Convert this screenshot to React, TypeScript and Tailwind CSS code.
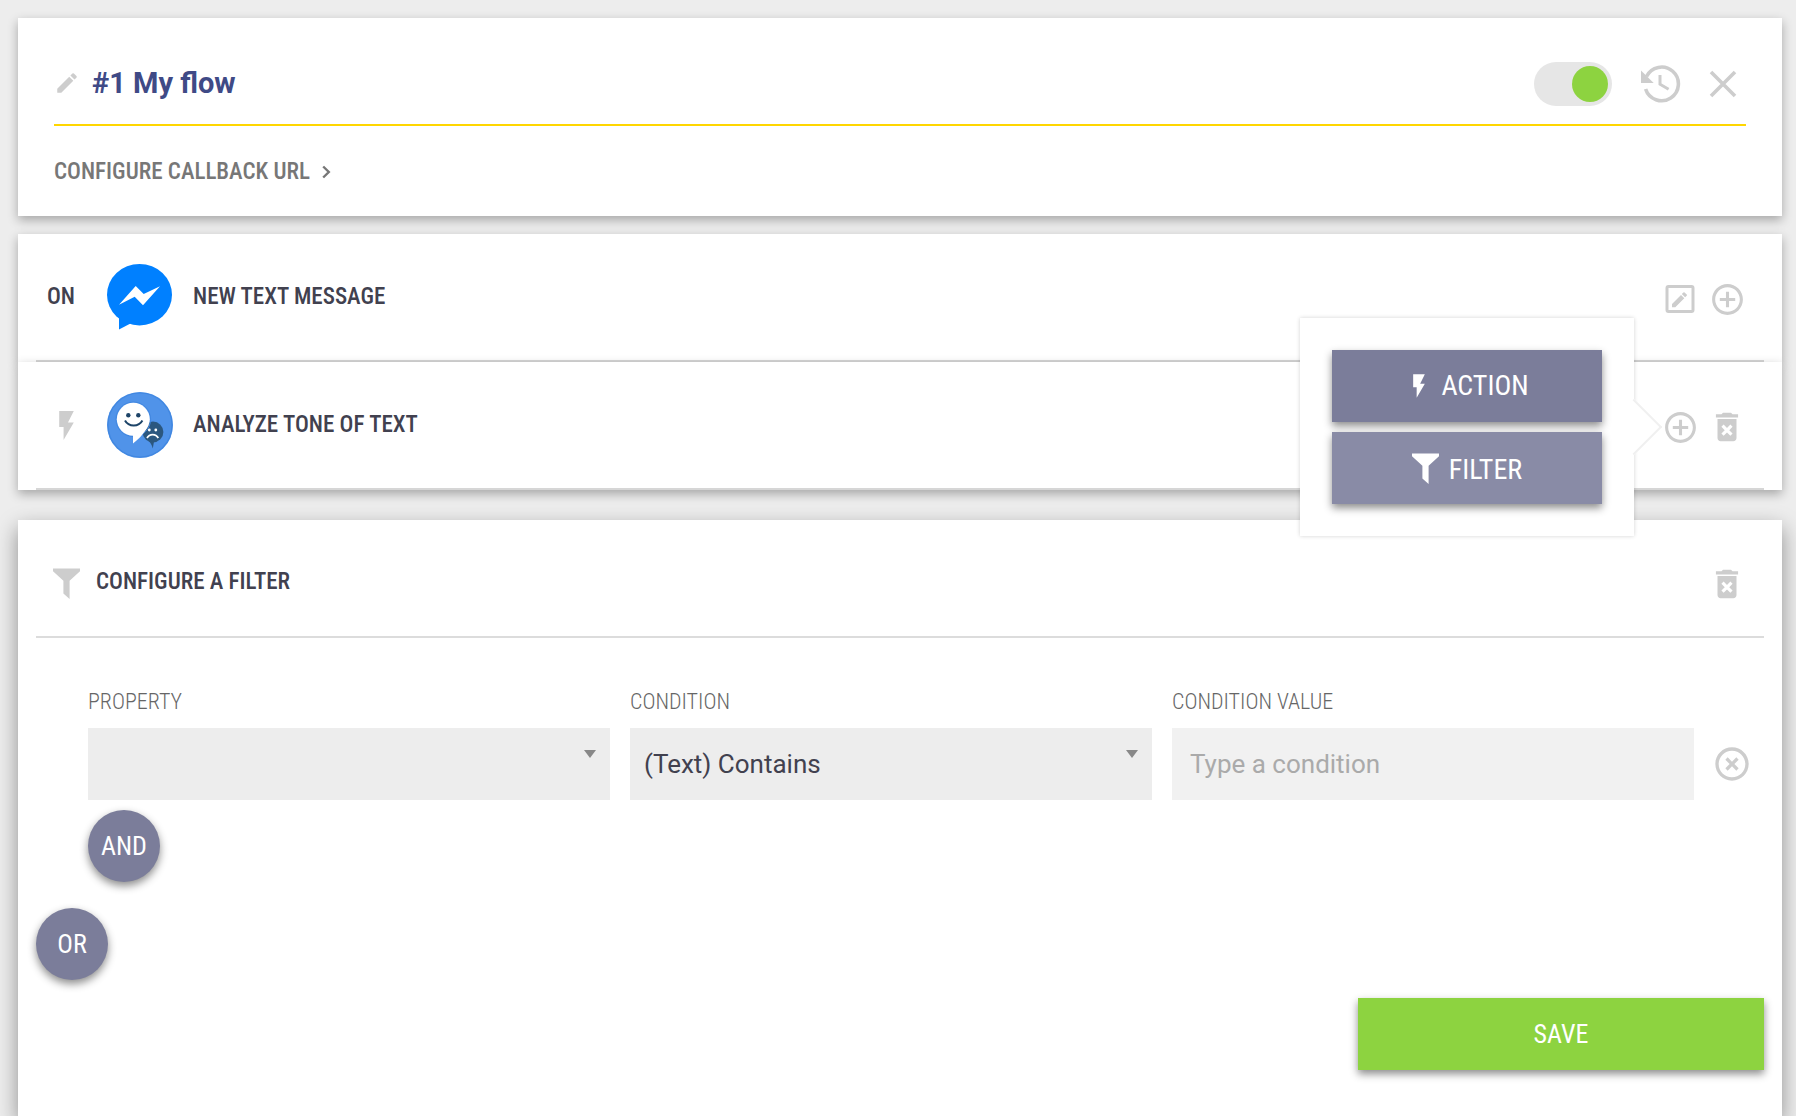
import { useState } from "react";
import type { ReactNode } from "react";
import { MdAddCircleOutline, MdDeleteForever, MdEdit, MdFlashOn, MdHighlightOff } from "react-icons/md";

const condensed = "font-['Roboto_Condensed','Roboto',sans-serif]";
const cardShadow = "shadow-[0_4px_10px_rgba(0,0,0,0.3)]";
const buttonShadow = "shadow-[0_4px_8px_rgba(0,0,0,0.45)]";

function HistoryIcon() {
  return (
    <svg width="40" height="38" viewBox="0 0 40 38" fill="none" aria-hidden="true">
      <path d="M5.5 11.5A16.8 16.8 0 1 1 4.6 24" stroke="currentColor" strokeWidth="3.6" />
      <path d="M0 5.5V18h12.7z" fill="currentColor" />
      <path d="M19 10v9.2l8.6 5" stroke="currentColor" strokeWidth="3" />
    </svg>
  );
}

function CloseIcon() {
  return (
    <svg width="28" height="28" viewBox="0 0 28 28" fill="none" aria-hidden="true">
      <path d="M2 2l24 24M26 2L2 26" stroke="currentColor" strokeWidth="3.6" />
    </svg>
  );
}

function ChevronIcon() {
  return (
    <svg width="9" height="14" viewBox="0 0 9 14" fill="none" aria-hidden="true">
      <path d="M1.2 1.5L6.8 7l-5.600 5.500" stroke="currentColor" strokeWidth="2.4" />
    </svg>
  );
}

function EditBoxIcon() {
  return (
    <svg width="30" height="30" viewBox="0 0 30 30" fill="none" aria-hidden="true">
      <rect x="2" y="2.5" width="26" height="25" rx="1.5" stroke="currentColor" strokeWidth="3" />
      <path
        d="M7 20v3.300h3.300l9-9-3.300-3.300L7 20zm14.700-8.200a.8.8 0 0 0 0-1.200l-2.100-2.100a.8.8 0 0 0-1.200 0L16.800 10l3.300 3.300 1.600-1.500z"
        fill="currentColor"
      />
    </svg>
  );
}

function FunnelIcon() {
  return (
    <svg width="27" height="31" viewBox="0 0 27 31" aria-hidden="true">
      <path d="M0 .5h27v2.700l-10.400 9.600V31l-6.200-5.600V12.800L0 3.200z" fill="currentColor" />
    </svg>
  );
}

function MessengerIcon() {
  return (
    <svg width="66" height="66" viewBox="0 0 66 66" aria-hidden="true">
      <ellipse cx="32.5" cy="30.7" rx="32.5" ry="30.7" fill="#0080ff" />
      <path d="M12 50v15.600l11.500-6.200z" fill="#0080ff" />
      <path d="M12 40.700L28.700 22l8 8L53 22.300l-17 19-8.300-8.600z" fill="#fff" />
    </svg>
  );
}

function ToneIcon() {
  return (
    <svg width="66" height="66" viewBox="0 0 66 66" fill="none" aria-hidden="true">
      <circle cx="33" cy="33" r="33" fill="#5093e9" />
      <circle cx="33" cy="33" r="32" stroke="#4187e0" strokeWidth="1.2" />
      <circle cx="46" cy="40" r="10.4" fill="#2b577f" />
      <path d="M39 48c3.500 1 5.500 3.500 6.800 8.500l1.200-7z" fill="#2b577f" />
      <circle cx="42.3" cy="38" r="1.4" fill="#fff" />
      <circle cx="48.8" cy="38" r="1.4" fill="#fff" />
      <path d="M40 46c2.500-4.600 8.800-4.600 11.300 0" stroke="#fff" strokeWidth="1.7" />
      <circle cx="26.3" cy="27.3" r="17.3" stroke="#4187e0" />
      <circle cx="26.3" cy="27.3" r="16.5" fill="#fff" />
      <path d="M26 42v9.500c5.500-4.500 11-9.500 14-16.500z" fill="#fff" />
      <circle cx="21.3" cy="23.3" r="2.2" fill="#1d4468" />
      <circle cx="31.3" cy="23.3" r="2.2" fill="#1d4468" />
      <path d="M18 28.600c3.600 6.600 13.800 6.600 17.400 0" stroke="#1d4468" strokeWidth="2" />
    </svg>
  );
}

function IconButton({ label, children }: { label: string; children: ReactNode }) {
  return (
    <button type="button" aria-label={label} className="flex items-center justify-center text-[#cdcdcd]">
      {children}
    </button>
  );
}

function FlowHeader() {
  const [enabled, setEnabled] = useState(true);

  return (
    <header className={`bg-white px-9 ${cardShadow}`}>
      <div className="flex h-[108px] items-center justify-between border-b-2 border-[#ffd600] pt-6">
        <div className="flex items-center gap-3">
          <IconButton label="Rename flow">
            <MdEdit size={26} />
          </IconButton>
          <h1 className="text-[29px] leading-9 font-bold text-[#3f4a86]">#1 My flow</h1>
        </div>
        <div className="flex items-center pt-0.5 pr-[9px]">
          <label className="mr-[29px] flex h-11 w-[78px] cursor-pointer items-center rounded-full bg-[#e6e6e6] p-1">
            <input
              type="checkbox"
              aria-label="Flow enabled"
              className="peer sr-only"
              checked={enabled}
              onChange={(e) => setEnabled(e.target.checked)}
            />
            <span className="size-9 rounded-full bg-[#b5b5b5] peer-checked:ml-auto peer-checked:bg-[#8dd340]" />
          </label>
          <div className="flex items-center gap-7">
            <IconButton label="History">
              <HistoryIcon />
            </IconButton>
            <IconButton label="Close">
              <CloseIcon />
            </IconButton>
          </div>
        </div>
      </div>
      <div className="flex h-[90px] items-center pt-0.5">
        <button type="button" className={`flex items-center gap-3 text-[23px] font-medium text-[#777] ${condensed}`}>
          CONFIGURE CALLBACK URL
          <ChevronIcon />
        </button>
      </div>
    </header>
  );
}

function AddStepMenu() {
  return (
    <div className="absolute top-1/2 right-full mr-7 w-[334px] -translate-y-1/2 bg-white p-8 shadow-[0_0_4px_rgba(0,0,0,0.18)]">
      <span className="absolute top-1/2 -right-5 size-10 -translate-y-1/2 rotate-45 border-t-2 border-r-2 border-[#f0f0f0] bg-white" />
      <div className={`relative flex flex-col gap-2.5 text-[28px] font-normal text-white ${condensed}`}>
        <button type="button" className={`flex h-[72px] items-center justify-center gap-2 bg-[#7b7d9a] ${buttonShadow}`}>
          <MdFlashOn size={28} />
          ACTION
        </button>
        <button type="button" className={`flex h-[72px] items-center justify-center gap-2.5 bg-[#898ba6] ${buttonShadow}`}>
          <FunnelIcon />
          <span className="pt-1">FILTER</span>
        </button>
      </div>
    </div>
  );
}

function StepRow({
  lead,
  icon,
  title,
  children,
}: {
  lead: ReactNode;
  icon: ReactNode;
  title: string;
  children: ReactNode;
}) {
  return (
    <li className={`bg-white px-[18px] ${cardShadow}`}>
      <div className={`flex h-32 items-center border-b-2 border-[#d6d6d6] text-[23px] font-medium text-[#41414f] ${condensed}`}>
        <div className="w-[71px] pl-[11px]">{lead}</div>
        {icon}
        <h2 className="ml-5">{title}</h2>
        <div className="ml-auto flex items-center pt-1">{children}</div>
      </div>
    </li>
  );
}

function StepList() {
  return (
    <ul className="relative z-10 mt-[18px]">
      <StepRow lead="ON" icon={<MessengerIcon />} title="NEW TEXT MESSAGE">
        <div className="flex items-center gap-3.5 pr-[18px]">
          <IconButton label="Edit trigger">
            <EditBoxIcon />
          </IconButton>
          <IconButton label="Add step after trigger">
            <MdAddCircleOutline size={37} />
          </IconButton>
        </div>
      </StepRow>
      <StepRow
        lead={<MdFlashOn size={35} className="ml-0.5 text-[#cdcdcd]" />}
        icon={<ToneIcon />}
        title="ANALYZE TONE OF TEXT"
      >
        <div className="flex items-center gap-[9px] pr-[18px]">
          <div className="relative">
            <IconButton label="Add step">
              <MdAddCircleOutline size={37} />
            </IconButton>
            <AddStepMenu />
          </div>
          <IconButton label="Delete step">
            <MdDeleteForever size={38} />
          </IconButton>
        </div>
      </StepRow>
    </ul>
  );
}

function FieldLabel({ htmlFor, children }: { htmlFor: string; children: ReactNode }) {
  return (
    <label htmlFor={htmlFor} className={`block text-[22px] leading-8 font-light text-[#666] ${condensed}`}>
      {children}
    </label>
  );
}

function SelectField({ id, label, options }: { id: string; label: string; options: string[] }) {
  return (
    <div className="flex-1">
      <FieldLabel htmlFor={id}>{label}</FieldLabel>
      <div className="relative mt-2.5">
        <select id={id} className="h-[72px] w-full appearance-none bg-[#ededed] px-3.5 text-[26px] text-[#41414f]">
          {options.map((o) => (
            <option key={o}>{o}</option>
          ))}
        </select>
        <svg width="12" height="8" viewBox="0 0 12 8" className="pointer-events-none absolute top-[22px] right-3.5">
          <path d="M0 0h12L6 8z" fill="#888" />
        </svg>
      </div>
    </div>
  );
}

function RoundButton({ children }: { children: ReactNode }) {
  return (
    <button type="button" className={`size-[72px] rounded-full bg-[#7b7d9a] text-[26px] text-white ${buttonShadow} ${condensed}`}>
      {children}
    </button>
  );
}

function FilterCard() {
  return (
    <section className="mt-[30px] flex-1 bg-white px-[18px] shadow-[0_8px_20px_rgba(0,0,0,0.4)]">
      <div className="flex h-[118px] items-center border-b-2 border-[#dcdcdc] pr-[18px] pl-[17px]">
        <span className="pt-2.5 text-[#cdcdcd]">
          <FunnelIcon />
        </span>
        <h2 className={`ml-4 pt-2 text-[23px] font-medium text-[#41414f] ${condensed}`}>CONFIGURE A FILTER</h2>
        <div className="ml-auto pt-3">
          <IconButton label="Delete filter">
            <MdDeleteForever size={38} />
          </IconButton>
        </div>
      </div>

      <form>
        <div className="flex items-end gap-5 pt-12 pr-3 pl-[52px]">
          <SelectField id="property" label="PROPERTY" options={[""]} />
          <SelectField id="condition" label="CONDITION" options={["(Text) Contains"]} />
          <div className="flex-1">
            <FieldLabel htmlFor="value">CONDITION VALUE</FieldLabel>
            <input
              id="value"
              type="text"
              placeholder="Type a condition"
              className="mt-2.5 h-[72px] w-full bg-[#f1f1f1] px-[18px] text-[26px] text-[#41414f] placeholder:text-[#aaa]"
            />
          </div>
          <div className="-ml-0.5 flex h-[72px] items-center">
            <IconButton label="Remove condition">
              <MdHighlightOff size={40} />
            </IconButton>
          </div>
        </div>

        <div className="mt-2.5 pl-[52px]">
          <RoundButton>AND</RoundButton>
        </div>
        <div className="mt-[26px]">
          <RoundButton>OR</RoundButton>
        </div>

        <div className="mt-[18px] flex justify-end">
          <button type="submit" className={`h-[72px] w-[406px] bg-[#8dd340] text-[26px] text-white ${buttonShadow} ${condensed}`}>
            SAVE
          </button>
        </div>
      </form>
    </section>
  );
}

export default function App() {
  return (
    <main className="flex min-h-screen flex-col overflow-hidden bg-[#ededed] pt-[18px] pr-3.5 pl-[18px] font-['Roboto',sans-serif]">
      <FlowHeader />
      <StepList />
      <FilterCard />
    </main>
  );
}
